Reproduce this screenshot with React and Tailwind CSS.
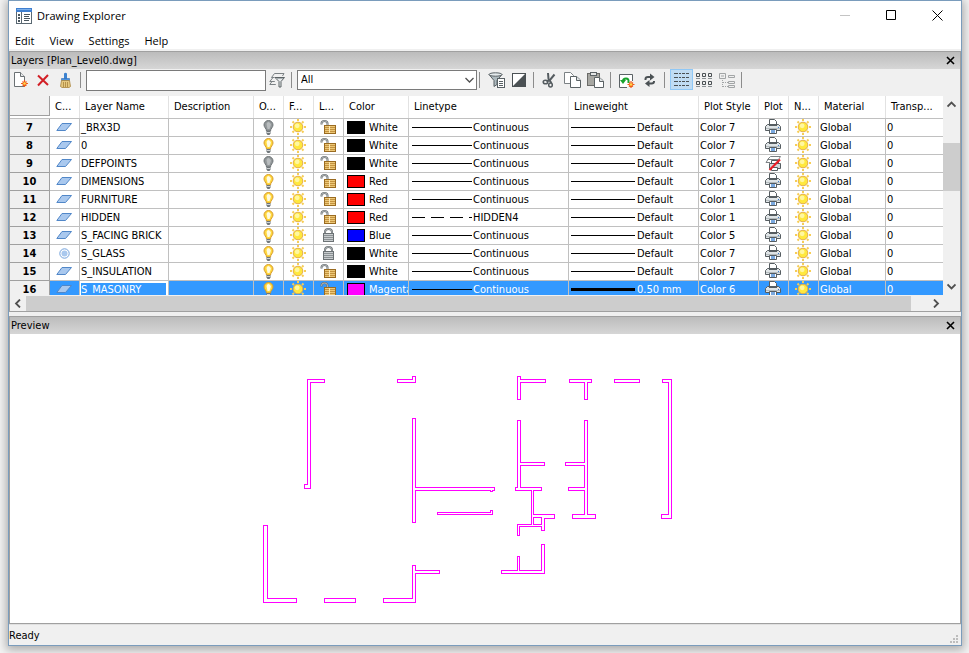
import React from "react";

const columns = [
  { label: "", width: "w-[40px]" },
  { label: "C...", width: "w-[30px]" },
  { label: "Layer Name", width: "w-[89px]" },
  { label: "Description", width: "w-[85px]" },
  { label: "O...", width: "w-[30px]" },
  { label: "F...", width: "w-[30px]" },
  { label: "L...", width: "w-[30px]" },
  { label: "Color", width: "w-[65px]" },
  { label: "Linetype", width: "w-[160px]" },
  { label: "Lineweight", width: "w-[130px]" },
  { label: "Plot Style", width: "w-[60px]" },
  { label: "Plot", width: "w-[30px]" },
  { label: "N...", width: "w-[30px]" },
  { label: "Material", width: "w-[67px]" },
  { label: "Transp...", width: "w-auto" },
];

const layers = [
  { id: 7, name: "_BRX3D", on: false, color: "White", swatch: "bg-black", style: "Color 7" },
  { id: 8, name: "0", on: true, color: "White", swatch: "bg-black", style: "Color 7" },
  { id: 9, name: "DEFPOINTS", on: false, color: "White", swatch: "bg-black", style: "Color 7", noPlot: true },
  { id: 10, name: "DIMENSIONS", on: true, color: "Red", swatch: "bg-[#ff0000]", style: "Color 1" },
  { id: 11, name: "FURNITURE", on: true, color: "Red", swatch: "bg-[#ff0000]", style: "Color 1" },
  { id: 12, name: "HIDDEN", on: true, color: "Red", swatch: "bg-[#ff0000]", style: "Color 1", linetype: "HIDDEN4" },
  { id: 13, name: "S_FACING BRICK", on: true, locked: true, color: "Blue", swatch: "bg-[#0000ff]", style: "Color 5" },
  { id: 14, name: "S_GLASS", on: true, locked: true, current: true, color: "White", swatch: "bg-black", style: "Color 7" },
  { id: 15, name: "S_INSULATION", on: true, color: "White", swatch: "bg-black", style: "Color 7" },
  { id: 16, name: "S_MASONRY", on: true, color: "Magenta", swatch: "bg-[#ff00ff]", style: "Color 6", weight: "0.50 mm", selected: true },
];

/* ---------- icons ---------- */

function Icon({ children, w = 16, h = 16 }) {
  return (
    <svg width={w} height={h} viewBox={`0 0 ${w} ${h}`} fill="none" className="block shrink-0" aria-hidden="true">
      {children}
    </svg>
  );
}

const AppIcon = () => (
  <Icon>
    <rect x="0.5" y="0.5" width="15" height="15" fill="#fff" stroke="#5a6872" />
    <rect width="16" height="4" fill="#3f7fd0" />
    <rect x="1" y="1" width="14" height="1" fill="#7db0ea" />
    <path d="M5.500 4v11" stroke="#5a6872" />
    <path d="M2 6h2v2H2zM2 9h2v2H2zM2 12h2v2H2z" fill="#4a565e" />
    <path d="M8 6.500h6M8 8.500h5M8 10.500h6M8 12.500h5" stroke="#4a565e" />
  </Icon>
);

const NewIcon = () => (
  <Icon>
    <path d="M1.500 0.500h6l4 4v10h-10z" fill="#fff" stroke="#6b7174" />
    <path d="M7.500 0.500v4h4" fill="#e6e8e9" stroke="#6b7174" />
    <path d="M11.500 8v7M8 11.500h7M9.500 9.500l4 4M13.500 9.500l-4 4" stroke="#ef5a1a" strokeWidth="1.200" />
    <circle cx="11.500" cy="11.500" r="1.300" fill="#ffd84a" />
  </Icon>
);

const DeleteIcon = () => (
  <Icon>
    <path d="M3 3.500l10 9.500M13 3L3 13.500" stroke="#d21f26" strokeWidth="2" />
  </Icon>
);

const BrushIcon = () => (
  <Icon>
    <path d="M7 1.500Q8.500 0 10 1.500V7H7z" fill="#3c82cf" />
    <path d="M4.500 6.500h8v2h-8z" fill="#4a91de" stroke="#2f6cb3" strokeWidth="0.600" />
    <path d="M4.500 8.500h8l1 6-1.500 1h-7l-1.500-1z" fill="#e6c880" stroke="#a8843c" strokeWidth="0.800" />
    <path d="M6.500 10v5M8.500 10v5M10.500 10v5" stroke="#a8843c" strokeWidth="0.800" />
  </Icon>
);

const LayerFilterIcon = () => (
  <Icon>
    <path d="M5.500 1.500h9.500l-1.500 2.500M5.500 1.500L2.500 5.500h3M4 5.500L0.800 9.500h5M3 9.500L0.800 12.500h6" stroke="#7b8184" />
    <path d="M6 5.500h9.500l-3.500 4v5.500h-2V9.500z" fill="#e8ebec" stroke="#5b6265" />
    <path d="M7.500 6.500h6.500" stroke="#a9b0b3" />
  </Icon>
);

const FunnelListIcon = () => (
  <Icon w={17}>
    <path d="M1 2.500l5 6v6l3-2v-4l5-6z" fill="#aebabf" stroke="#596165" />
    <ellipse cx="7.500" cy="2.500" rx="6.500" ry="1.700" fill="#e4eaec" stroke="#596165" />
    <rect x="9.500" y="6.500" width="7" height="9" fill="#fff" stroke="#596165" />
    <path d="M11 9.500h4M11 11.500h4M11 13.500h4" stroke="#596165" />
  </Icon>
);

const InvertIcon = () => (
  <Icon w={17}>
    <rect x="1.500" y="1.500" width="13" height="13" fill="#fff" stroke="#4b5154" />
    <path d="M15 1v14H1z" fill="#4b5154" />
  </Icon>
);

const CutIcon = () => (
  <Icon w={17}>
    <path d="M7 1l0.500 6 3 4" stroke="#555c60" strokeWidth="2" />
    <path d="M13.500 2.500L9 8l-3.500 1.500" stroke="#555c60" strokeWidth="2" />
    <ellipse cx="4.500" cy="10" rx="2.300" ry="1.800" stroke="#555c60" strokeWidth="1.500" />
    <ellipse cx="9.500" cy="13" rx="1.800" ry="2" stroke="#555c60" strokeWidth="1.500" />
  </Icon>
);

const CopyIcon = () => (
  <Icon w={17}>
    <path d="M0.500 0.500h6l3 3v8h-9z" fill="#fff" stroke="#7b8184" />
    <path d="M6.500 4.500h6l4 3.500v7.500h-10z" fill="#fff" stroke="#5b6265" />
    <path d="M12.500 4.500V8.500h4" fill="#dfe3e4" stroke="#5b6265" />
  </Icon>
);

const PasteIcon = () => (
  <Icon w={17}>
    <rect x="0.500" y="1.500" width="12" height="12" fill="#a7a7a2" stroke="#6b6b68" />
    <rect x="3.500" y="0.500" width="6" height="3" fill="#e4e6e6" stroke="#5b6265" />
    <path d="M7.500 5.500h5l4 3.500v6.500h-9z" fill="#fff" stroke="#5b6265" />
    <path d="M12.500 5.500v4h4" fill="#dfe3e4" stroke="#5b6265" />
  </Icon>
);

const RegenIcon = () => (
  <Icon w={17}>
    <path d="M14.500 9V2.500h-13v13H9" fill="#fff" stroke="#5b6265" />
    <path d="M5 9Q5 6.500 8 6.500T10.500 10v1" stroke="#18a32c" strokeWidth="2" />
    <path d="M2 8h6l-3 4z" fill="#18a32c" />
    <path d="M13 9v7M9.500 12.500h7M11 10.500l4 4M15 10.500l-4 4" stroke="#ef5a1a" strokeWidth="1.200" />
    <circle cx="13" cy="12.500" r="1.300" fill="#ffd84a" />
  </Icon>
);

const RefreshIcon = () => (
  <Icon w={17}>
    <path d="M4.500 8V7Q4.500 5 7 5h3" stroke="#4b5154" strokeWidth="2" />
    <path d="M9 1.500l4.500 3.500L9 8.500z" fill="#4b5154" />
    <path d="M13 9v0.500Q13 11.500 10.500 11.500H7" stroke="#4b5154" strokeWidth="2" />
    <path d="M8.500 8L4 11.500 8.500 15z" fill="#4b5154" />
  </Icon>
);

const DetailsIcon = () => (
  <Icon w={17}>
    <path d="M1 2.500h15M1 6.500h15M1 10.500h15M1 14.500h15" stroke="#4b5154" strokeDasharray="4 1 2 1 3 1 4" />
  </Icon>
);

const TilesIcon = () => (
  <Icon w={17}>
    <path d="M0.500 1.500h3v3h-3zM6.500 1.500h3v3h-3zM12.500 1.500h3v3h-3zM0.500 9.500h3v3h-3zM6.500 9.500h3v3h-3zM12.500 9.500h3v3h-3z" stroke="#4b5154" />
    <path d="M0 6.500h4M6 6.500h4M12 6.500h4M0 14.500h4M6 14.500h4M12 14.500h4" stroke="#8a9093" />
  </Icon>
);

const TreeIcon = () => (
  <Icon w={17}>
    <path d="M0.500 1.500h6v5h-6zM2 4h3M9.500 3.500h6v2h-6zM9.500 9.500h6v2h-6zM9.500 13.500h6v2h-6z" stroke="#a2a5a6" />
    <path d="M3.500 8v7M4 10.500h5M4 14.500h5" stroke="#a2a5a6" strokeDasharray="1 1" />
  </Icon>
);

const PlaneIcon = () => (
  <Icon>
    <path d="M6 4.500h9.500l-6 7H0.800z" fill="#a9c8ee" stroke="#5187c8" />
  </Icon>
);

const CurrentIcon = () => (
  <Icon>
    <circle cx="8.500" cy="8.500" r="4.700" fill="#fff" stroke="#6fa0dc" />
    <circle cx="8.500" cy="8.500" r="3" fill="#a9c8ee" />
  </Icon>
);

const BulbIcon = ({ on }) => (
  <Icon>
    <path
      d="M8.500 1.500a4.500 4.500 0 0 1 4.500 4.500c0 2.400-2.500 3.400-2.500 6h-4c0-2.600-2.500-3.600-2.500-6A4.500 4.500 0 0 1 8.500 1.500z"
      fill={on ? "#ffd83d" : "#929799"}
      stroke={on ? "#d79a2b" : "#6c7275"}
    />
    <path d="M6.500 5Q7 3 8.500 3t2.500 2.500L9.500 10h-2z" fill={on ? "#fffbe0" : "#b9bdbf"} />
    <path d="M6.500 12h4v2.500l-1 1.500h-2l-1-1.500z" fill="#6f767a" />
    <path d="M7 13.500h3" stroke="#cfd2d4" />
  </Icon>
);

const SunIcon = () => (
  <Icon>
    <path
      d="M8 0v2M8 14v2M0 8h2M14 8h2M2.500 2.500L4 4M12 12l1.500 1.500M2.500 13.500L4 12M12 4l1.500-1.500"
      stroke="#f7cd55"
      strokeWidth="2"
    />
    <circle cx="8" cy="8" r="4.800" fill="#ffe83c" stroke="#e3ac4d" />
    <circle cx="7.200" cy="6.800" r="2.400" fill="#fff7a0" />
  </Icon>
);

const LockIcon = ({ locked }) =>
  locked ? (
    <Icon>
      <path d="M5 7V5Q5 2 8.500 2T12 5v2" stroke="#6c7275" strokeWidth="2" />
      <path d="M5 7V5Q5 2 8.500 2T12 5v2" stroke="#c7cbcd" strokeWidth="0.600" />
      <rect x="3.500" y="6.500" width="10" height="8" fill="#c9cdcf" stroke="#6c7275" />
      <path d="M4 8.500h9M4 10.500h9M4 12.500h9" stroke="#8b9194" />
    </Icon>
  ) : (
    <Icon>
      <path d="M1.500 5.500V4.500Q1.500 2 4.500 2T7.500 4.500V7" stroke="#6c7275" strokeWidth="2" />
      <path d="M1.500 5V4.500Q1.500 2 4.500 2T7.500 4.500V6" stroke="#d9dcdd" strokeWidth="0.600" />
      <rect x="4.500" y="6.500" width="11" height="8" fill="#edc878" stroke="#9a6b20" />
      <path d="M5 8.500h10M5 10.500h10M5 12.500h10" stroke="#c4933f" />
      <path d="M9.500 7v7" stroke="#fbe7b4" />
    </Icon>
  );

const PrinterIcon = () => (
  <Icon>
    <path d="M4.500 6V0.500h5l2 2V6" fill="#fff" stroke="#565d61" />
    <path d="M2.500 5.500h11l2 2v4h-15v-4z" fill="#dfe4e6" stroke="#565d61" />
    <path d="M4 6.500h8" stroke="#565d61" />
    <path d="M1 9.500h14" stroke="#b4bbbe" />
    <path d="M4.500 10.500h7v4h-7z" fill="#fff" stroke="#565d61" />
    <path d="M6 11h4v3H6z" fill="#7aa9e0" />
    <path d="M13 8.500h1" stroke="#3a7bd0" />
  </Icon>
);

const NoPrinterIcon = () => (
  <Icon>
    <path d="M5.500 1.500h10l-2 3H2.500zM3 4.500l-2 3h4" fill="#fff" stroke="#7b8184" />
    <path d="M6.500 9V5.500h7V9" fill="#fff" stroke="#565d61" />
    <path d="M4.500 8.500h11v5h-11z" fill="#d3d8da" stroke="#565d61" />
    <path d="M6.500 12.500h6v3h-6z" fill="#fff" stroke="#565d61" />
    <path d="M15 4.500L4.500 15" stroke="#ee1c25" strokeWidth="2.200" />
  </Icon>
);

const Chevron = ({ d }) => (
  <Icon w={9} h={9}>
    <path d={d} stroke="#505050" strokeWidth="1.800" />
  </Icon>
);

/* ---------- pieces ---------- */

function ToolButton({ label, icon, active, wide = true }) {
  return (
    <button
      type="button"
      aria-label={label}
      aria-pressed={active}
      className={`flex h-[21px] shrink-0 items-start justify-center ${wide ? "w-[23px]" : "w-[22px]"} ${
        active ? "border border-[#90c8f6] bg-[#c0dcf3] pt-px" : "pt-[3px]"
      }`}
    >
      {icon}
    </button>
  );
}

const Separator = ({ className }) => <span className={`mt-[3px] h-4 w-px shrink-0 bg-[#8c8c8c] ${className}`} />;

function DockTitle({ children }) {
  return (
    <div className="flex h-[17px] shrink-0 items-center justify-between bg-linear-to-b from-[#bcbcbc] to-[#d6d6d6] pr-[5px] pl-px">
      <h2>{children}</h2>
      <button type="button" aria-label={`Close ${children}`}>
        <Icon w={9} h={9}>
          <path d="M1 1l7 7M8 1L1 8" stroke="#000" strokeWidth="1.600" />
        </Icon>
      </button>
    </div>
  );
}

function IconCell({ label, className, children }) {
  return (
    <td className={className}>
      <button type="button" aria-label={label} className="flex h-[17px] w-full items-start justify-center pr-px">
        {children}
      </button>
    </td>
  );
}

function TextCell({ className, children }) {
  return (
    <td className={className}>
      <span className="block pt-px pl-px">{children}</span>
    </td>
  );
}

function LayerRow({ layer }) {
  const sel = layer.selected;
  const cell = `h-[18px] border-b border-[#c0c0c0] p-0 whitespace-nowrap overflow-hidden ${
    sel ? "bg-[#3399ff] text-white" : "bg-white"
  }`;
  const ruled = `${cell} border-r`;
  return (
    <tr>
      <th scope="row" className="h-[18px] border-r border-b border-[#a0a0a0] bg-[#f0f0f0] p-0 text-center font-bold">
        <span className="block pt-px">{layer.id}</span>
      </th>
      <IconCell label="Current" className={ruled}>
        {layer.current ? <CurrentIcon /> : <PlaneIcon />}
      </IconCell>
      {sel ? (
        <td className={ruled}>
          <input
            aria-label="Layer name"
            defaultValue={layer.name}
            className="block h-[17px] w-full border-2 border-r-2 border-l border-white bg-[#3399ff] text-white outline-none"
          />
        </td>
      ) : (
        <TextCell className={ruled}>{layer.name}</TextCell>
      )}
      <td className={ruled} />
      <IconCell label="On/Off" className={ruled}>
        <BulbIcon on={layer.on} />
      </IconCell>
      <IconCell label="Freeze" className={ruled}>
        <SunIcon />
      </IconCell>
      <IconCell label="Lock" className={ruled}>
        <LockIcon locked={layer.locked} />
      </IconCell>
      <td className={ruled}>
        <div className="flex items-start gap-1 pl-[3px]">
          <span className={`mt-0.5 h-[13px] w-[18px] shrink-0 border border-black ${layer.swatch}`} />
          <span className="pt-px">{layer.color}</span>
        </div>
      </td>
      <td className={ruled}>
        <div className="flex items-start pl-[3px]">
          <svg width="61" height="3" className="mt-[7px] shrink-0" aria-hidden="true">
            <path d="M0 1.500H60" stroke="#000" strokeDasharray={layer.linetype ? "13 6" : undefined} />
          </svg>
          <span className="pt-px">{layer.linetype || "Continuous"}</span>
        </div>
      </td>
      <td className={ruled}>
        <div className="flex items-start gap-0.5 pl-0.5">
          <svg width="64" height="3" className="mt-[7px] shrink-0" aria-hidden="true">
            <path d="M0 1.500H64" stroke="#000" strokeWidth={layer.weight ? 3 : 1} />
          </svg>
          <span className="pt-px">{layer.weight || "Default"}</span>
        </div>
      </td>
      <TextCell className={ruled}>{layer.style}</TextCell>
      <IconCell label="Plot" className={ruled}>
        {layer.noPlot ? <NoPrinterIcon /> : <PrinterIcon />}
      </IconCell>
      <IconCell label="New viewport freeze" className={ruled}>
        <SunIcon />
      </IconCell>
      <TextCell className={ruled}>Global</TextCell>
      <TextCell className={cell}>0</TextCell>
    </tr>
  );
}

const walls = [
  "M307 379H324V382H310V488H304V484H307Z",
  "M397 379H412V376H415V382H397Z",
  "M412 418H415V487H494V490H492V491H490V490H415V522H412Z",
  "M437 512H490V510H492V514H437Z",
  "M263 525H267V598H296V602H263Z",
  "M324 598H355V602H324Z",
  "M383 598H412V565H415V570H439V573H415V602H383Z",
  "M517 376H520V379H545V382H520V399H517Z",
  "M569 379H591V382H587V399H584V382H569Z",
  "M614 379H639V382H614Z",
  "M662 379H671V518H661V514H668V382H662Z",
  "M517 420H520V462H544V465H520V487H541V490H533V514H554V518H544V530H541V526H519V535H517V524H531V490H515V487H517Z",
  "M533 517H541V524H533Z",
  "M584 420H587V514H595V518H572V514H584V490H568V487H584V465H565V462H584Z",
  "M541 544H544V573H501V570H517V556H519V570H541Z",
];

export default function App() {
  return (
    <div className="h-screen w-full overflow-hidden bg-[#f4f4f4] pr-[7px] pb-[7px] pl-2 font-['DejaVu_Sans_Condensed','DejaVu_Sans',sans-serif] text-[11px] leading-[16px] text-black">
      <div className="flex h-full flex-col border border-[#7a9cbc] bg-[#f0f0f0] shadow-[0_2px_9px_2px_rgba(0,0,0,0.3)]">
        <header className="shrink-0 bg-white font-['Open_Sans',sans-serif]">
          <div className="flex h-[29px] items-center pr-[18px] pl-[7px]">
            <AppIcon />
            <h1 className="ml-[5px] flex-1">Drawing Explorer</h1>
            <div className="flex items-center gap-[35px]">
              <button type="button" aria-label="Minimize">
                <Icon w={11} h={11}>
                  <path d="M0 5.500h10" stroke="#c4c4c4" />
                </Icon>
              </button>
              <button type="button" aria-label="Maximize">
                <Icon w={11} h={11}>
                  <path d="M0.500 0.500h9v9h-9z" stroke="#000" />
                </Icon>
              </button>
              <button type="button" aria-label="Close">
                <Icon w={11} h={11}>
                  <path d="M0.500 0.500l10 10M10.500 0.500l-10 10" stroke="#000" />
                </Icon>
              </button>
            </div>
          </div>
          <nav className="flex h-[19px] items-end gap-[15px] pl-[6px]">
            <button type="button">Edit</button>
            <button type="button">View</button>
            <button type="button">Settings</button>
            <button type="button">Help</button>
          </nav>
        </header>

        <section className="mt-0.5 shrink-0 border border-[#a0a0a0]">
          <DockTitle>Layers [Plan_Level0.dwg]</DockTitle>

          <div className="flex h-[27px] items-start">
            <ToolButton wide={false} label="New layer" icon={<NewIcon />} />
            <ToolButton wide={false} label="Delete layer" icon={<DeleteIcon />} />
            <ToolButton wide={false} label="Purge" icon={<BrushIcon />} />
            <Separator className="mr-[5px] ml-1" />
            <input aria-label="Search layers" className="mt-px h-[21px] w-[180px] border border-[#7a7a7a] bg-white px-1 outline-none" />
            <ToolButton wide={false} label="Layer states" icon={<LayerFilterIcon />} />
            <Separator className="mr-[5px] ml-[3px]" />
            <div className="relative mt-px">
              <select
                aria-label="Filter"
                className="block h-[20px] w-[180px] appearance-none border border-[#7a7a7a] bg-white px-[3px] outline-none"
              >
                <option>All</option>
              </select>
              <span className="pointer-events-none absolute top-[7px] right-[3px]">
                <Icon w={9} h={7}>
                  <path d="M0.500 1l4 4 4-4" stroke="#505050" strokeWidth="1.300" />
                </Icon>
              </span>
            </div>
            <Separator className="mr-[5px] ml-0.5" />
            <ToolButton label="Edit filter" icon={<FunnelListIcon />} />
            <ToolButton label="Invert filter" icon={<InvertIcon />} />
            <Separator className="mr-1 ml-0.5" />
            <ToolButton label="Cut" icon={<CutIcon />} />
            <ToolButton label="Copy" icon={<CopyIcon />} />
            <ToolButton label="Paste" icon={<PasteIcon />} />
            <Separator className="mr-1 ml-[3px]" />
            <ToolButton label="Regenerate" icon={<RegenIcon />} />
            <ToolButton label="Refresh" icon={<RefreshIcon />} />
            <Separator className="mr-[5px] ml-[3px]" />
            <ToolButton active label="Details" icon={<DetailsIcon />} />
            <ToolButton label="Icons" icon={<TilesIcon />} />
            <ToolButton label="Tree" icon={<TreeIcon />} />
            <Separator className="ml-0.5" />
          </div>

          <div className="flex h-[199px]">
            <div className="min-w-0 flex-1 overflow-hidden bg-white">
              <table className="w-full table-fixed border-separate border-spacing-0">
                <thead>
                  <tr>
                    {columns.map((c, i) => (
                      <th
                        key={i}
                        scope="col"
                        className={`h-[23px] border-b border-[#c0c0c0] p-0 text-left align-top font-normal whitespace-nowrap ${c.width}`}
                      >
                        {i === 0 ? (
                          <div className="h-5 border-r border-b border-[#a0a0a0] bg-[#f0f0f0]" />
                        ) : (
                          <div
                            className={`h-[22px] overflow-hidden border-[#e2e2e2] pt-[3px] pl-[5px] ${
                              i === columns.length - 1 ? "" : "border-r"
                            }`}
                          >
                            {c.label}
                          </div>
                        )}
                      </th>
                    ))}
                  </tr>
                </thead>
                <tbody>
                  {layers.map((l) => (
                    <LayerRow key={l.id} layer={l} />
                  ))}
                </tbody>
              </table>
            </div>
            <div className="flex w-[17px] shrink-0 flex-col items-center bg-[#f0f0f0]">
              <button type="button" aria-label="Scroll up" className="flex h-[17px] items-center">
                <Chevron d="M0.500 6.500l4-4 4 4" />
              </button>
              <div className="flex-1 self-stretch pt-[30px]">
                <div className="h-12 bg-[#cdcdcd]" />
              </div>
              <button type="button" aria-label="Scroll down" className="flex h-[17px] items-center">
                <Chevron d="M0.500 2.500l4 4 4-4" />
              </button>
            </div>
          </div>

          <div className="flex h-4 bg-[#f0f0f0] pr-[17px]">
            <button type="button" aria-label="Scroll left" className="flex w-4 items-center justify-center">
              <Chevron d="M6 0.500l-4 4 4 4" />
            </button>
            <div className="mt-px mr-4 flex-1 bg-[#cdcdcd]" />
            <button type="button" aria-label="Scroll right" className="flex w-4 items-center justify-center">
              <Chevron d="M3 0.500l4 4-4 4" />
            </button>
          </div>
        </section>

        <section className="mt-1 flex min-h-0 flex-1 flex-col border border-[#a0a0a0]">
          <DockTitle>Preview</DockTitle>
          <div className="min-h-0 flex-1 bg-white">
            <svg viewBox="10 334 950 289" className="block h-full w-full" role="img" aria-label="Floor plan preview">
              <g transform="translate(0.5 0.5)" fill="none" stroke="#ff00ff" shapeRendering="crispEdges">
                {walls.map((d) => (
                  <path key={d} d={d} />
                ))}
              </g>
            </svg>
          </div>
        </section>

        <footer className="flex h-[21px] shrink-0 items-center justify-between border-t border-[#e0e0e0] pr-0.5">
          <span className="pt-px">Ready</span>
          <svg width="9" height="9" className="mt-2" aria-hidden="true">
            <path d="M6 0h2v2H6zM3 3h2v2H3zM6 3h2v2H6zM0 6h2v2H0zM3 6h2v2H3zM6 6h2v2H6z" fill="#bdbdbd" />
          </svg>
        </footer>
      </div>
    </div>
  );
}
